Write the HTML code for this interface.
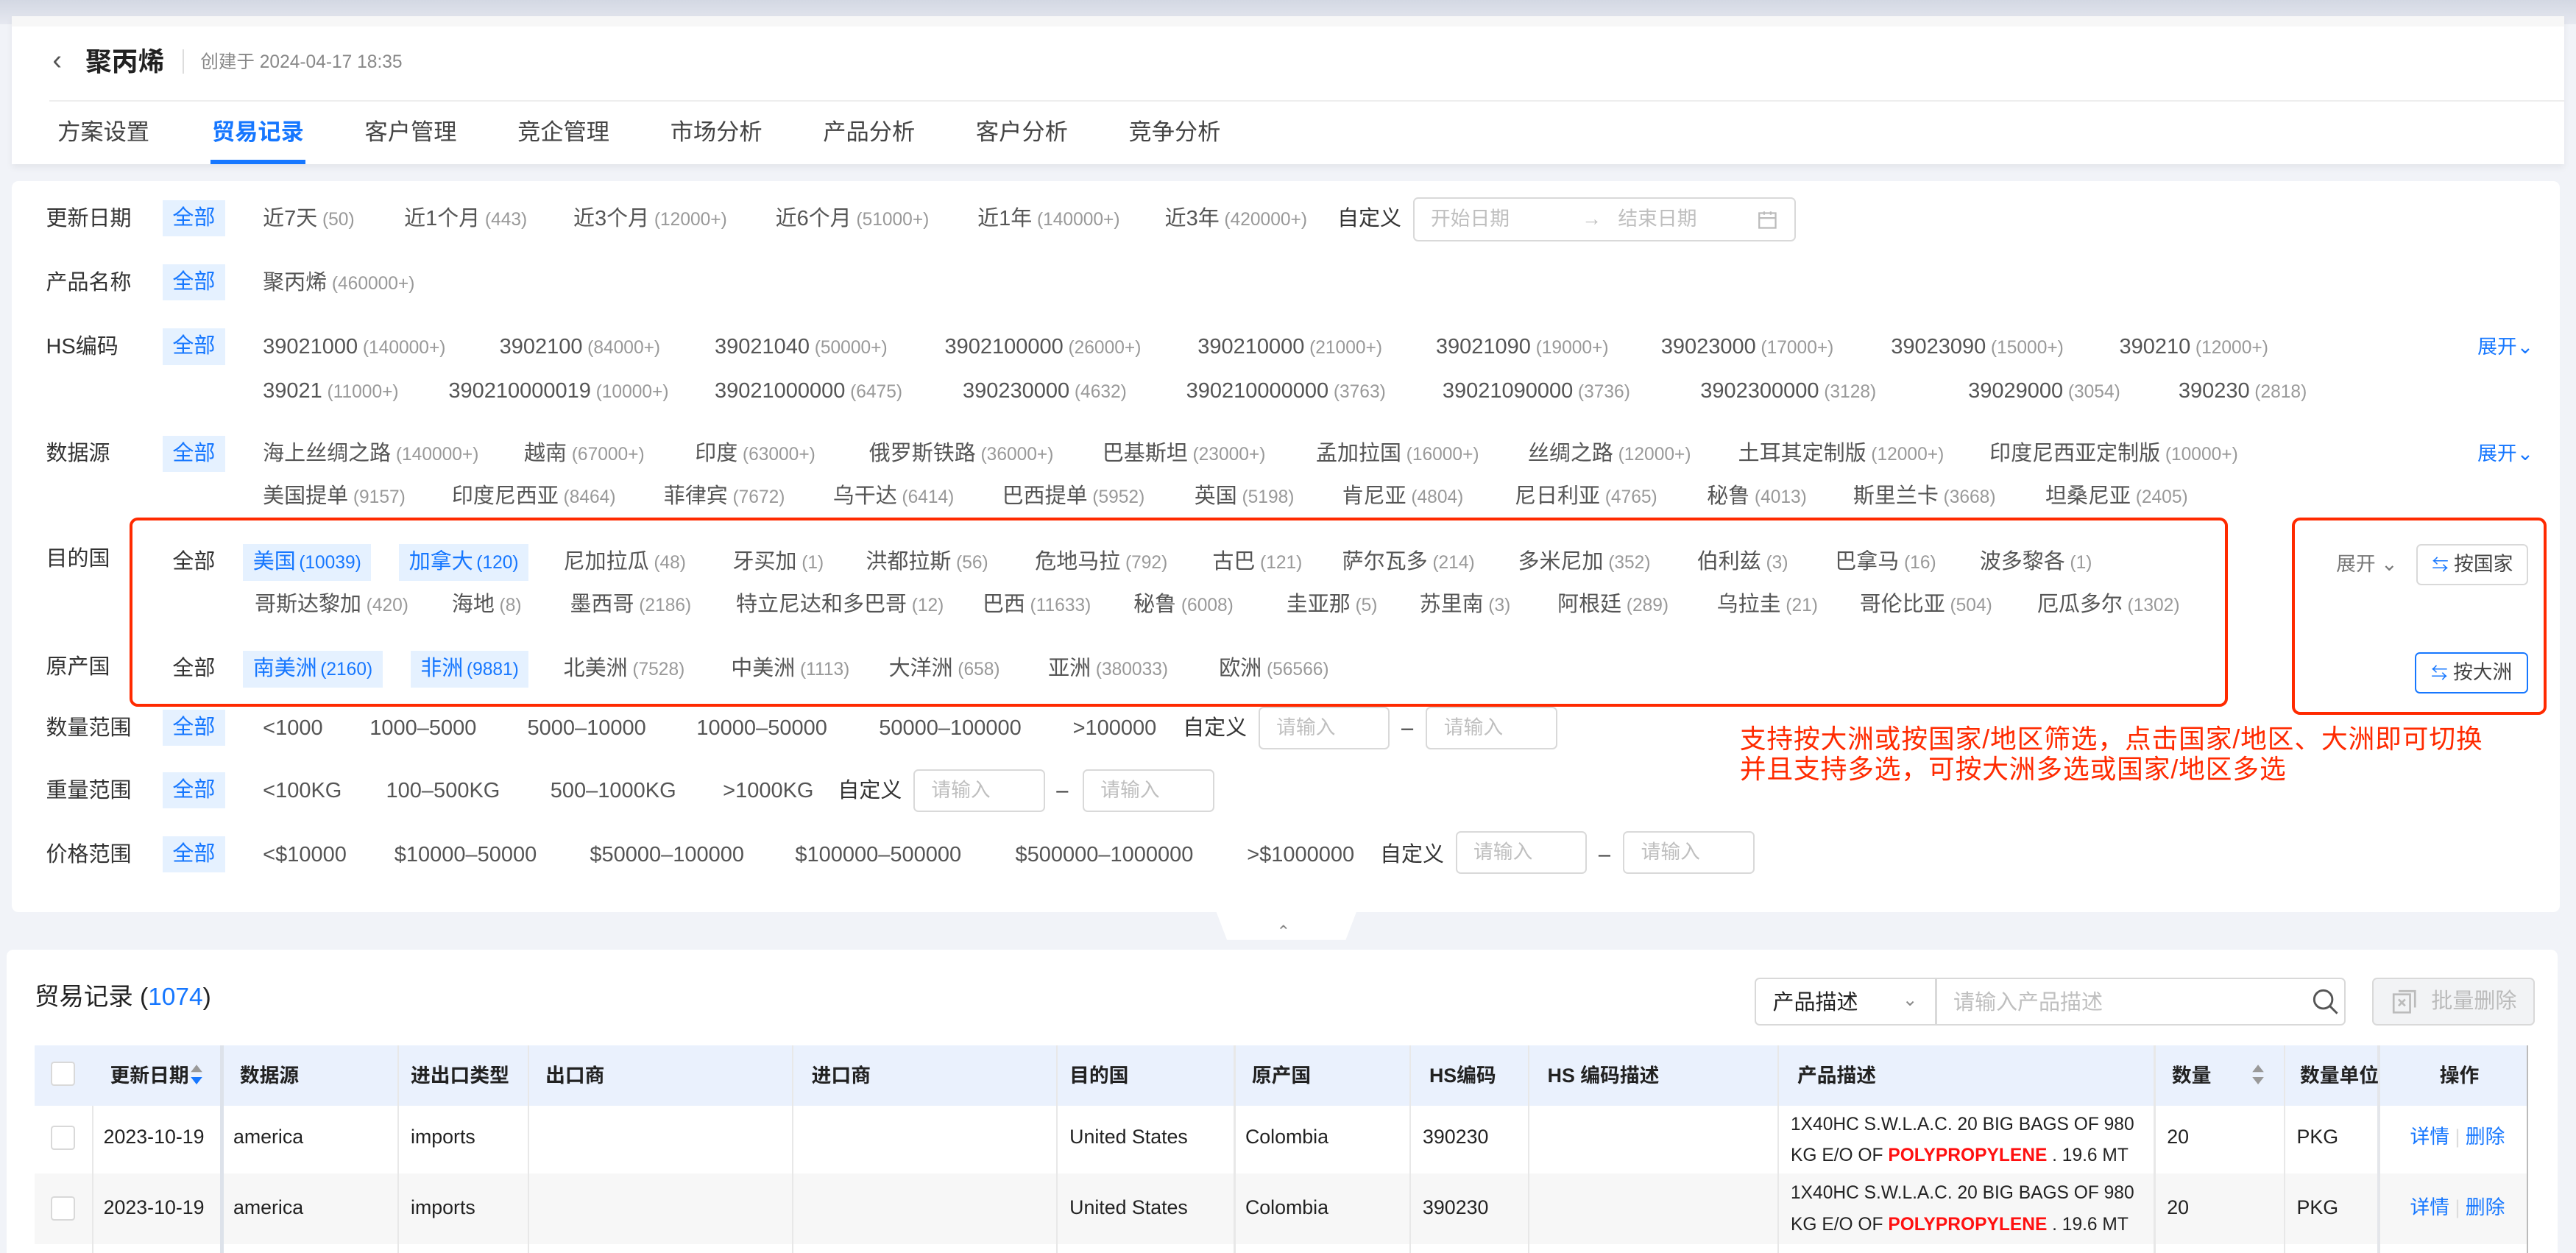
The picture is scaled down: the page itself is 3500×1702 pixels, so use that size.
<!DOCTYPE html>
<html><head><meta charset="utf-8">
<style>
html,body{margin:0;padding:0;width:3500px;height:1702px;overflow:hidden;background:#f1f3f8}
#w{zoom:2.23214;width:1568px;height:763px;position:relative;font-family:"Liberation Sans","Noto Sans CJK SC",sans-serif;color:#333;font-size:13px;overflow:hidden}
.a{position:absolute}
.t{position:absolute;white-space:nowrap;line-height:18px}
.t i{font-style:normal;font-size:11px;color:#999;margin-left:3px}
.g{color:#555}
.tag{position:absolute;background:#e5f1ff;color:#1677ff;line-height:22px;padding:0 6px;white-space:nowrap}
.tag i{font-style:normal;font-size:11px;color:#1677ff;margin-left:2px}
.inp{position:absolute;border:1px solid #d9d9d9;border-radius:3px;background:#fff;height:26px;box-sizing:border-box;color:#bfbfbf;font-size:12px;line-height:24px;padding-left:10px}
.lab{position:absolute;left:28px;line-height:18px;color:#333}
.th{position:absolute;top:636px;height:37px;line-height:37px;font-size:12px;font-weight:bold;color:#222;white-space:nowrap}
.td{position:absolute;font-size:12px;color:#222;white-space:nowrap;line-height:16px}
.vl{position:absolute;width:1px;background:#e8e8e8}
.cb{position:absolute;width:13px;height:13px;border:1px solid #d9d9d9;border-radius:2px;background:#fff}
</style></head><body><div id="w">
<div class="a" style="left:0;top:0;width:1568px;height:15px;background:linear-gradient(#d3d8e3,#e6e8f0)"></div>
<div class="a" style="left:7px;top:10px;width:1554px;height:90px;background:#fff;box-shadow:0 2px 4px rgba(0,0,0,.06)"></div>
<div class="a" style="left:7px;top:10px;width:1554px;height:6px;background:#f7f7f7"></div>
<div class="t" style="left:32px;top:28px;font-size:17px;color:#555">&#8249;</div>
<div class="t" style="left:52px;top:28px;font-size:16px;font-weight:bold;color:#222;line-height:20px">聚丙烯</div>
<div class="a" style="left:111px;top:30px;width:1px;height:15px;background:#ddd"></div>
<div class="t" style="left:122px;top:29px;font-size:11px;color:#888">创建于 2024-04-17 18:35</div>
<div class="a" style="left:30px;top:61px;width:1531px;height:1px;background:#eee"></div>
<div class="t" style="left:35px;top:71px;font-size:14px;line-height:20px;color:#444">方案设置</div>
<div class="t" style="left:129px;top:71px;font-size:14px;line-height:20px;color:#1677ff;font-weight:bold">贸易记录</div>
<div class="t" style="left:222px;top:71px;font-size:14px;line-height:20px;color:#444">客户管理</div>
<div class="t" style="left:315px;top:71px;font-size:14px;line-height:20px;color:#444">竞企管理</div>
<div class="t" style="left:408px;top:71px;font-size:14px;line-height:20px;color:#444">市场分析</div>
<div class="t" style="left:501px;top:71px;font-size:14px;line-height:20px;color:#444">产品分析</div>
<div class="t" style="left:594px;top:71px;font-size:14px;line-height:20px;color:#444">客户分析</div>
<div class="t" style="left:687px;top:71px;font-size:14px;line-height:20px;color:#444">竞争分析</div>
<div class="a" style="left:128px;top:97px;width:58px;height:3px;background:#1677ff"></div>

<div class="a" style="left:7px;top:110px;width:1551px;height:445px;background:#fff;border-radius:4px"></div>
<div class="a" style="left:740px;top:554px;width:86px;height:18px;background:#fff;clip-path:polygon(0 0,100% 0,92% 100%,8% 100%)"></div>
<div class="t" style="left:777px;top:558px;font-size:10px;color:#888">&#8963;</div>

<div class="lab" style="top:124px">更新日期</div>
<div class="tag" style="left:99px;top:122px">全部</div>
<div class="t g" style="left:160px;top:124px">近7天<i>(50)</i></div>
<div class="t g" style="left:246px;top:124px">近1个月<i>(443)</i></div>
<div class="t g" style="left:349px;top:124px">近3个月<i>(12000+)</i></div>
<div class="t g" style="left:472px;top:124px">近6个月<i>(51000+)</i></div>
<div class="t g" style="left:595px;top:124px">近1年<i>(140000+)</i></div>
<div class="t g" style="left:709px;top:124px">近3年<i>(420000+)</i></div>
<div class="t" style="left:814px;top:124px">自定义</div>
<div class="inp" style="left:860px;top:120px;width:233px;height:27px;line-height:25px">开始日期<span style="position:absolute;left:102px">&#8594;</span><span style="position:absolute;left:124px">结束日期</span>
<svg style="position:absolute;left:209px;top:7px" width="12" height="12" viewBox="0 0 12 12" fill="none" stroke="#bbb"><rect x="1" y="2" width="10" height="9"/><path d="M1 5h10M4 1v2M8 1v2"/></svg></div>

<div class="lab" style="top:163px">产品名称</div>
<div class="tag" style="left:99px;top:161px">全部</div>
<div class="t g" style="left:160px;top:163px">聚丙烯<i>(460000+)</i></div>

<div class="lab" style="top:202px">HS编码</div>
<div class="tag" style="left:99px;top:200px">全部</div>
<div class="t g" style="left:160px;top:202px">39021000<i>(140000+)</i></div>
<div class="t g" style="left:304px;top:202px">3902100<i>(84000+)</i></div>
<div class="t g" style="left:435px;top:202px">39021040<i>(50000+)</i></div>
<div class="t g" style="left:575px;top:202px">3902100000<i>(26000+)</i></div>
<div class="t g" style="left:729px;top:202px">390210000<i>(21000+)</i></div>
<div class="t g" style="left:874px;top:202px">39021090<i>(19000+)</i></div>
<div class="t g" style="left:1011px;top:202px">39023000<i>(17000+)</i></div>
<div class="t g" style="left:1151px;top:202px">39023090<i>(15000+)</i></div>
<div class="t g" style="left:1290px;top:202px">390210<i>(12000+)</i></div>
<div class="t" style="left:1508px;top:202px;color:#1677ff;font-size:12px">展开&#8964;</div>
<div class="t g" style="left:160px;top:229px">39021<i>(11000+)</i></div>
<div class="t g" style="left:273px;top:229px">390210000019<i>(10000+)</i></div>
<div class="t g" style="left:435px;top:229px">39021000000<i>(6475)</i></div>
<div class="t g" style="left:586px;top:229px">390230000<i>(4632)</i></div>
<div class="t g" style="left:722px;top:229px">390210000000<i>(3763)</i></div>
<div class="t g" style="left:878px;top:229px">39021090000<i>(3736)</i></div>
<div class="t g" style="left:1035px;top:229px">3902300000<i>(3128)</i></div>
<div class="t g" style="left:1198px;top:229px">39029000<i>(3054)</i></div>
<div class="t g" style="left:1326px;top:229px">390230<i>(2818)</i></div>

<div class="lab" style="top:267px">数据源</div>
<div class="tag" style="left:99px;top:265px">全部</div>
<div class="t g" style="left:160px;top:267px">海上丝绸之路<i>(140000+)</i></div>
<div class="t g" style="left:319px;top:267px">越南<i>(67000+)</i></div>
<div class="t g" style="left:423px;top:267px">印度<i>(63000+)</i></div>
<div class="t g" style="left:529px;top:267px">俄罗斯铁路<i>(36000+)</i></div>
<div class="t g" style="left:671px;top:267px">巴基斯坦<i>(23000+)</i></div>
<div class="t g" style="left:801px;top:267px">孟加拉国<i>(16000+)</i></div>
<div class="t g" style="left:930px;top:267px">丝绸之路<i>(12000+)</i></div>
<div class="t g" style="left:1058px;top:267px">土耳其定制版<i>(12000+)</i></div>
<div class="t g" style="left:1211px;top:267px">印度尼西亚定制版<i>(10000+)</i></div>
<div class="t" style="left:1508px;top:267px;color:#1677ff;font-size:12px">展开&#8964;</div>
<div class="t g" style="left:160px;top:293px">美国提单<i>(9157)</i></div>
<div class="t g" style="left:275px;top:293px">印度尼西亚<i>(8464)</i></div>
<div class="t g" style="left:404px;top:293px">菲律宾<i>(7672)</i></div>
<div class="t g" style="left:507px;top:293px">乌干达<i>(6414)</i></div>
<div class="t g" style="left:610px;top:293px">巴西提单<i>(5952)</i></div>
<div class="t g" style="left:727px;top:293px">英国<i>(5198)</i></div>
<div class="t g" style="left:817px;top:293px">肯尼亚<i>(4804)</i></div>
<div class="t g" style="left:922px;top:293px">尼日利亚<i>(4765)</i></div>
<div class="t g" style="left:1039px;top:293px">秘鲁<i>(4013)</i></div>
<div class="t g" style="left:1128px;top:293px">斯里兰卡<i>(3668)</i></div>
<div class="t g" style="left:1245px;top:293px">坦桑尼亚<i>(2405)</i></div>

<div class="a" style="left:79px;top:315px;width:1277px;height:115px;border:2px solid #ff2a00;border-radius:5px;box-sizing:border-box"></div>
<div class="lab" style="top:331px">目的国</div>
<div class="t" style="left:105px;top:333px">全部</div>
<div class="tag" style="left:148px;top:331px">美国<i>(10039)</i></div>
<div class="tag" style="left:243px;top:331px">加拿大<i>(120)</i></div>
<div class="t g" style="left:343px;top:333px">尼加拉瓜<i>(48)</i></div>
<div class="t g" style="left:446px;top:333px">牙买加<i>(1)</i></div>
<div class="t g" style="left:527px;top:333px">洪都拉斯<i>(56)</i></div>
<div class="t g" style="left:630px;top:333px">危地马拉<i>(792)</i></div>
<div class="t g" style="left:738px;top:333px">古巴<i>(121)</i></div>
<div class="t g" style="left:817px;top:333px">萨尔瓦多<i>(214)</i></div>
<div class="t g" style="left:924px;top:333px">多米尼加<i>(352)</i></div>
<div class="t g" style="left:1033px;top:333px">伯利兹<i>(3)</i></div>
<div class="t g" style="left:1117px;top:333px">巴拿马<i>(16)</i></div>
<div class="t g" style="left:1205px;top:333px">波多黎各<i>(1)</i></div>
<div class="t g" style="left:155px;top:359px">哥斯达黎加<i>(420)</i></div>
<div class="t g" style="left:275px;top:359px">海地<i>(8)</i></div>
<div class="t g" style="left:347px;top:359px">墨西哥<i>(2186)</i></div>
<div class="t g" style="left:448px;top:359px">特立尼达和多巴哥<i>(12)</i></div>
<div class="t g" style="left:598px;top:359px">巴西<i>(11633)</i></div>
<div class="t g" style="left:690px;top:359px">秘鲁<i>(6008)</i></div>
<div class="t g" style="left:783px;top:359px">圭亚那<i>(5)</i></div>
<div class="t g" style="left:864px;top:359px">苏里南<i>(3)</i></div>
<div class="t g" style="left:948px;top:359px">阿根廷<i>(289)</i></div>
<div class="t g" style="left:1045px;top:359px">乌拉圭<i>(21)</i></div>
<div class="t g" style="left:1132px;top:359px">哥伦比亚<i>(504)</i></div>
<div class="t g" style="left:1240px;top:359px">厄瓜多尔<i>(1302)</i></div>
<div class="lab" style="top:397px">原产国</div>
<div class="t" style="left:105px;top:398px">全部</div>
<div class="tag" style="left:148px;top:396px">南美洲<i>(2160)</i></div>
<div class="tag" style="left:250px;top:396px">非洲<i>(9881)</i></div>
<div class="t g" style="left:343px;top:398px">北美洲<i>(7528)</i></div>
<div class="t g" style="left:445px;top:398px">中美洲<i>(1113)</i></div>
<div class="t g" style="left:541px;top:398px">大洋洲<i>(658)</i></div>
<div class="t g" style="left:638px;top:398px">亚洲<i>(380033)</i></div>
<div class="t g" style="left:742px;top:398px">欧洲<i>(56566)</i></div>

<div class="a" style="left:1395px;top:315px;width:155px;height:120px;border:2px solid #ff2a00;border-radius:5px;box-sizing:border-box"></div>
<div class="t" style="left:1422px;top:334px;color:#777;font-size:12px">展开 &#8964;</div>
<div class="a" style="left:1471px;top:331px;width:68px;height:25px;border:1px solid #d9d9d9;border-radius:3px;box-sizing:border-box;font-size:12px;line-height:23px;color:#444;text-align:center"><span style="color:#1677ff;font-size:10px">&#8646;</span> 按国家</div>
<div class="a" style="left:1470px;top:397px;width:69px;height:25px;border:1px solid #1677ff;border-radius:3px;box-sizing:border-box;font-size:12px;line-height:23px;color:#444;text-align:center"><span style="color:#1677ff;font-size:10px">&#8646;</span> 按大洲</div>
<div class="t" style="left:1059px;top:441px;color:#ff2a00;font-size:16px;letter-spacing:0.4px">支持按大洲或按国家/地区筛选，点击国家/地区、大洲即可切换</div>
<div class="t" style="left:1059px;top:459px;color:#ff2a00;font-size:16px;letter-spacing:0.4px">并且支持多选，可按大洲多选或国家/地区多选</div>

<div class="lab" style="top:434px">数量范围</div>
<div class="tag" style="left:99px;top:432px">全部</div>
<div class="t g" style="left:160px;top:434px">&lt;1000</div>
<div class="t g" style="left:225px;top:434px">1000–5000</div>
<div class="t g" style="left:321px;top:434px">5000–10000</div>
<div class="t g" style="left:424px;top:434px">10000–50000</div>
<div class="t g" style="left:535px;top:434px">50000–100000</div>
<div class="t g" style="left:653px;top:434px">&gt;100000</div>
<div class="t" style="left:720px;top:434px">自定义</div>
<div class="inp" style="left:766px;top:430px;width:80px">请输入</div>
<div class="t" style="left:853px;top:434px">–</div>
<div class="inp" style="left:868px;top:430px;width:80px">请输入</div>

<div class="lab" style="top:472px">重量范围</div>
<div class="tag" style="left:99px;top:470px">全部</div>
<div class="t g" style="left:160px;top:472px">&lt;100KG</div>
<div class="t g" style="left:235px;top:472px">100–500KG</div>
<div class="t g" style="left:335px;top:472px">500–1000KG</div>
<div class="t g" style="left:440px;top:472px">&gt;1000KG</div>
<div class="t" style="left:510px;top:472px">自定义</div>
<div class="inp" style="left:556px;top:468px;width:80px">请输入</div>
<div class="t" style="left:643px;top:472px">–</div>
<div class="inp" style="left:659px;top:468px;width:80px">请输入</div>

<div class="lab" style="top:511px">价格范围</div>
<div class="tag" style="left:99px;top:509px">全部</div>
<div class="t g" style="left:160px;top:511px">&lt;$10000</div>
<div class="t g" style="left:240px;top:511px">$10000–50000</div>
<div class="t g" style="left:359px;top:511px">$50000–100000</div>
<div class="t g" style="left:484px;top:511px">$100000–500000</div>
<div class="t g" style="left:618px;top:511px">$500000–1000000</div>
<div class="t g" style="left:759px;top:511px">&gt;$1000000</div>
<div class="t" style="left:840px;top:511px">自定义</div>
<div class="inp" style="left:886px;top:506px;width:80px">请输入</div>
<div class="t" style="left:973px;top:511px">–</div>
<div class="inp" style="left:988px;top:506px;width:80px">请输入</div>

<div class="a" style="left:4px;top:578px;width:1553px;height:200px;background:#fff;border-radius:4px"></div>
<div class="t" style="left:21px;top:597px;font-size:15px;line-height:20px;color:#222">贸易记录 (<span style="color:#1677ff">1074</span>)</div>
<div class="a" style="left:1068px;top:595px;width:360px;height:29px;border:1px solid #d9d9d9;border-radius:3px;box-sizing:border-box"></div>
<div class="a" style="left:1178px;top:596px;width:1px;height:27px;background:#d9d9d9"></div>
<div class="t" style="left:1079px;top:601px;font-size:13px;color:#222">产品描述</div>
<div class="t" style="left:1158px;top:600px;font-size:11px;color:#888">&#8964;</div>
<div class="t" style="left:1189px;top:601px;font-size:13px;color:#bfbfbf">请输入产品描述</div>
<svg class="a" style="left:1407px;top:601px" width="17" height="17" viewBox="0 0 17 17" fill="none" stroke="#555" stroke-width="1.3"><circle cx="7" cy="7" r="5.5"/><path d="M11 11l4.5 4.5"/></svg>
<div class="a" style="left:1444px;top:595px;width:99px;height:29px;border:1px solid #d9d9d9;border-radius:3px;box-sizing:border-box;background:#f2f3f5;color:#bbb;font-size:13px;line-height:27px;padding-left:35px">批量删除</div>
<svg class="a" style="left:1456px;top:602px" width="15" height="15" viewBox="0 0 15 15" fill="none" stroke="#bbb" stroke-width="1.2"><rect x="1" y="3" width="10" height="11"/><path d="M4 1h10v10M4 6l4 4M8 6l-4 4"/></svg>

<div class="a" style="left:21px;top:636px;width:1517px;height:37px;background:#eaf1fd"></div>
<div class="a" style="left:21px;top:673px;width:1517px;height:41px;background:#fff;border-bottom:1px solid #eee"></div>
<div class="a" style="left:21px;top:714px;width:1517px;height:43px;background:#f7f7f7;border-bottom:1px solid #eee"></div>
<div class="a" style="left:21px;top:757px;width:1517px;height:6px;background:#fff"></div>
<div class="vl" style="left:134px;top:636px;height:130px;background:#dde2ea;width:2px"></div>
<div class="vl" style="left:242px;top:636px;height:130px"></div>
<div class="vl" style="left:321px;top:636px;height:130px"></div>
<div class="vl" style="left:482px;top:636px;height:130px"></div>
<div class="vl" style="left:643px;top:636px;height:130px"></div>
<div class="vl" style="left:751px;top:636px;height:130px"></div>
<div class="vl" style="left:858px;top:636px;height:130px"></div>
<div class="vl" style="left:930px;top:636px;height:130px"></div>
<div class="vl" style="left:1082px;top:636px;height:130px"></div>
<div class="vl" style="left:1311px;top:636px;height:130px"></div>
<div class="vl" style="left:1390px;top:636px;height:130px"></div>
<div class="vl" style="left:1447px;top:636px;height:130px;background:#e4e6ea;width:2px"></div>
<div class="vl" style="left:1538px;top:636px;height:130px;background:#bbb"></div>
<div class="vl" style="left:56px;top:673px;height:90px"></div>

<div class="cb" style="left:31px;top:646px"></div>
<div class="th" style="left:67px">更新日期</div>
<svg class="a" style="left:115px;top:647px" width="9" height="14" viewBox="0 0 9 14"><path d="M4.5 1L8 5.5H1z" fill="#999"/><path d="M4.5 13L8 8.5H1z" fill="#1677ff"/></svg>
<div class="th" style="left:146px">数据源</div>
<div class="th" style="left:250px">进出口类型</div>
<div class="th" style="left:332px">出口商</div>
<div class="th" style="left:494px">进口商</div>
<div class="th" style="left:651px">目的国</div>
<div class="th" style="left:762px">原产国</div>
<div class="th" style="left:870px">HS编码</div>
<div class="th" style="left:942px">HS 编码描述</div>
<div class="th" style="left:1094px">产品描述</div>
<div class="th" style="left:1322px">数量</div>
<svg class="a" style="left:1370px;top:647px" width="9" height="14" viewBox="0 0 9 14"><path d="M4.5 1L8 5.5H1z" fill="#999"/><path d="M4.5 13L8 8.5H1z" fill="#999"/></svg>
<div class="th" style="left:1400px">数量单位</div>
<div class="th" style="left:1485px">操作</div>

<div class="cb" style="left:31px;top:685px"></div>
<div class="td" style="left:63px;top:684px">2023-10-19</div>
<div class="td" style="left:142px;top:684px">america</div>
<div class="td" style="left:250px;top:684px">imports</div>
<div class="td" style="left:651px;top:684px">United States</div>
<div class="td" style="left:758px;top:684px">Colombia</div>
<div class="td" style="left:866px;top:684px">390230</div>
<div class="td" style="left:1090px;top:675px;font-size:11px;line-height:19px">1X40HC S.W.L.A.C. 20 BIG BAGS OF 980<br>KG E/O OF <b style="color:#ff1010">POLYPROPYLENE</b> . 19.6 MT</div>
<div class="td" style="left:1319px;top:684px">20</div>
<div class="td" style="left:1398px;top:684px">PKG</div>
<div class="td" style="left:1467px;top:684px;color:#1677ff">详情 <span style="color:#ddd">|</span> 删除</div>

<div class="cb" style="left:31px;top:728px"></div>
<div class="td" style="left:63px;top:727px">2023-10-19</div>
<div class="td" style="left:142px;top:727px">america</div>
<div class="td" style="left:250px;top:727px">imports</div>
<div class="td" style="left:651px;top:727px">United States</div>
<div class="td" style="left:758px;top:727px">Colombia</div>
<div class="td" style="left:866px;top:727px">390230</div>
<div class="td" style="left:1090px;top:717px;font-size:11px;line-height:19px">1X40HC S.W.L.A.C. 20 BIG BAGS OF 980<br>KG E/O OF <b style="color:#ff1010">POLYPROPYLENE</b> . 19.6 MT</div>
<div class="td" style="left:1319px;top:727px">20</div>
<div class="td" style="left:1398px;top:727px">PKG</div>
<div class="td" style="left:1467px;top:727px;color:#1677ff">详情 <span style="color:#ddd">|</span> 删除</div>
</div></body></html>
